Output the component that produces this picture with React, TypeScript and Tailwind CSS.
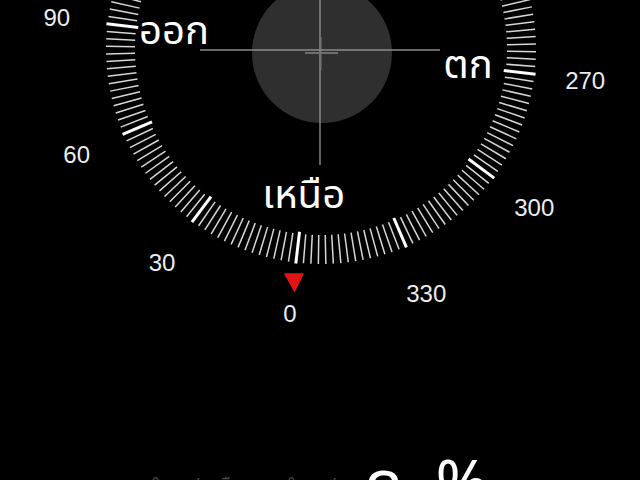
const CX = 321;
const CY = 49;
const ROT = 96.7; // screen angle of the 0° mark

const polar = (deg: number, r: number) => {
  const a = ((ROT + deg) * Math.PI) / 180;
  return { x: CX + r * Math.cos(a), y: CY + r * Math.sin(a) };
};

const TICKS = Array.from({ length: 180 }, (_, i) => i * 2);
const DEGREES = Array.from({ length: 12 }, (_, i) => i * 30);
const CARDINALS = [
  { deg: 0, label: "เหนือ" },
  { deg: 90, label: "ออก" },
  { deg: 180, label: "ใต้" },
  { deg: 270, label: "ตก" },
];

function Dial() {
  return (
    <svg width={640} height={440} viewBox="0 0 640 440" className="block shrink-0">
      {/* level bubble + crosshair */}
      <circle cx={322} cy={53} r={70} fill="#2f2f2f" />
      <line x1={320} y1={0} x2={320} y2={165} stroke="#8c8c8c" strokeWidth={1.4} />
      <line x1={200} y1={50} x2={440} y2={50} stroke="#8c8c8c" strokeWidth={1.4} />
      <rect x={305} y={52} width={33} height={2} fill="#6f6f6f" />
      <line x1={321} y1={37} x2={321} y2={70} stroke="#777" strokeWidth={1} />

      {TICKS.map((d) => {
        const major = d % 30 === 0;
        const a = polar(d, major ? 184 : 186);
        const b = polar(d, major ? 216 : 215);
        return (
          <line
            key={d}
            x1={a.x}
            y1={a.y}
            x2={b.x}
            y2={b.y}
            stroke={major ? "#ffffff" : "#d6d6d6"}
            strokeWidth={major ? 3 : 1.5}
          />
        );
      })}

      {DEGREES.map((d) => {
        const p = polar(d, 266);
        return (
          <text
            key={d}
            x={p.x}
            y={p.y}
            textAnchor="middle"
            dominantBaseline="central"
            fill="#ececec"
            fontSize={24}
            className="font-['Liberation_Sans',Arial,sans-serif]"
          >
            {d}
          </text>
        );
      })}

      {CARDINALS.map((c) => {
        const p = polar(c.deg, 148);
        return (
          <text
            key={c.deg}
            x={p.x}
            y={p.y}
            textAnchor="middle"
            dominantBaseline="central"
            fill="#ffffff"
            fontSize={40}
            className="font-['Noto_Sans_Thai','Noto_Sans','DejaVu_Sans',sans-serif]"
          >
            {c.label}
          </text>
        );
      })}

      {/* north marker */}
      <path
        d="M285 274 L303 274 L294.5 291 Z"
        fill="#e31414"
        stroke="#e31414"
        strokeLinejoin="round"
        strokeWidth={1.5}
      />
    </svg>
  );
}

export default function App() {
  return (
    <div className="w-[640px] h-[480px] overflow-hidden bg-black flex flex-col font-['Noto_Sans_Thai','Noto_Sans','DejaVu_Sans',sans-serif]">
      <Dial />
      <div className="flex items-start pl-[132px]">
        <div className="flex gap-4 pt-[32px] text-[18px] text-[#4a4a4a]">
          <span>๑๓°</span>
          <span>๔๕′ เหนือ</span>
          <span>๑๐๐°</span>
          <span>๓๐′</span>
        </div>
      </div>
      <div className="-mt-[44px] pl-[364px] flex gap-8 text-[64px] leading-none text-white">
        <span>ด</span>
        <span>%</span>
      </div>
    </div>
  );
}
